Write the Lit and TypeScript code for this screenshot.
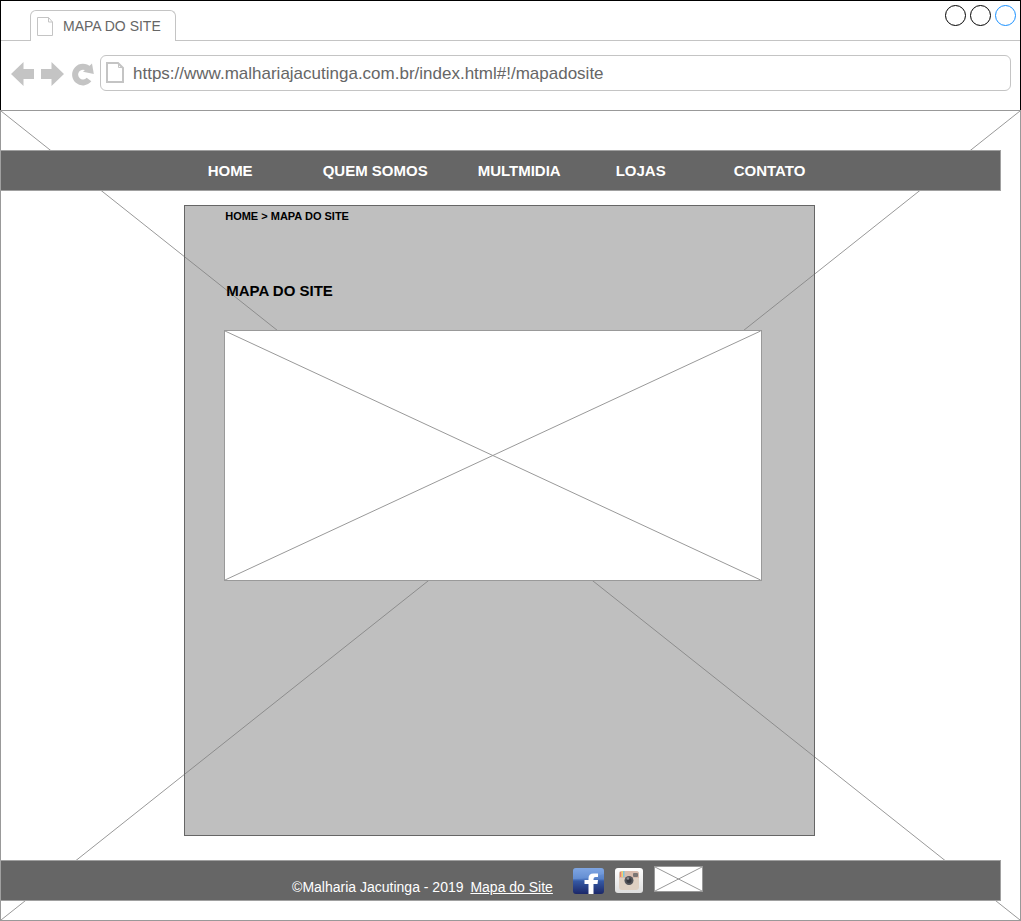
import { LitElement, html, svg, css } from "lit";
import { customElement, property } from "lit/decorators.js";

/** A box crossed by its two diagonals: the wireframe sign for an image. */
@customElement("crossed-box")
class CrossedBox extends LitElement {
  static styles = css`
    :host { display: block; box-sizing: border-box; border: 1px solid #999; background: #fff; }
    .cross { display: block; width: 100%; height: 100%; }
    .cross line { stroke: #999; stroke-width: 1; }
  `;
  render() {
    return html`<svg class="cross" aria-hidden="true">
      <line x1="0" y1="0" x2="100%" y2="100%"></line>
      <line x1="0" y1="100%" x2="100%" y2="0"></line>
    </svg>`;
  }
}

/** A sheet of paper with a folded corner. */
@customElement("page-icon")
class PageIcon extends LitElement {
  @property({ type: Boolean }) heavy = false;
  static styles = css`
    :host { display: block; flex: none; }
    svg { display: block; }
    path { fill: none; stroke: #c4c4c4; }
  `;
  render() {
    return this.heavy
      ? html`<svg width="18" height="21" viewBox="0 0 18 21"><path stroke-width="2" d="M1 1H12L17 6V20H1Z"/><path stroke-width="1" d="M12.5 1V5.5H17"/></svg>`
      : html`<svg width="16" height="19" viewBox="0 0 16 19"><path d="M.5 .5H11.5L15.5 5V18.5H.5Z"/><path d="M11.5 .5V5H15.5"/></svg>`;
  }
}

const facebook = svg`
  <defs>
    <linearGradient id="fb" x1="0" y1="0" x2="0" y2="1">
      <stop offset="0" stop-color="#7da3e0"/><stop offset=".42" stop-color="#5580c8"/>
      <stop offset=".5" stop-color="#3559a4"/><stop offset="1" stop-color="#1b2768"/>
    </linearGradient>
  </defs>
  <rect width="31" height="26" rx="3" fill="url(#fb)"/>
  <path d="M0 11Q15 11 31 6V3Q31 0 28 0H3Q0 0 0 3Z" fill="#86abe8" opacity=".3"/>
  <path d="M15.500 26V16H11.500V12H15.500V10.500Q15.500 5.500 20.500 5.500H25V9H22.500Q20.500 9 20.500 11V12H25L24.500 16H20.500V26Z" fill="#fff"/>`;

const instagram = svg`
  <defs>
    <linearGradient id="ig" x1="0" y1="0" x2="0" y2="1">
      <stop offset="0" stop-color="#fff"/><stop offset="1" stop-color="#dedede"/>
    </linearGradient>
  </defs>
  <rect width="28" height="25" rx="3" fill="url(#ig)"/>
  <rect x="4" y="3" width="20" height="19" rx="3" fill="#dfd0c2"/>
  <path d="M4 10V6Q4 3 7 3H21Q24 3 24 6V10Z" fill="#d8bcae"/>
  <path d="M5 4H6.500V9H5Z" fill="#e87d70"/><path d="M6.500 3H8V9H6.500Z" fill="#f0d070"/>
  <path d="M8 3H9.500V9H8Z" fill="#7fc4dc"/>
  <rect x="18" y="5" width="5" height="4" rx="1" fill="#7c7674"/>
  <circle cx="14" cy="12.500" r="4.500" fill="#55555a"/>
  <circle cx="14" cy="12.500" r="2.500" fill="#38383e"/>
  <circle cx="13" cy="10.500" r="1.300" fill="#8b8b92"/>`;

@customElement("app-root")
class AppRoot extends LitElement {
  static styles = css`
    :host {
      display: flex; flex-direction: column; box-sizing: border-box; min-height: 100vh;
      font-family: "Liberation Sans", Arial, sans-serif; color: #000; background: #fff;
    }
    * { box-sizing: border-box; }
    svg { display: block; }
    a { color: inherit; text-decoration: none; }

    .chrome { border: 1px solid #000; border-bottom: 0; }
    .tabs { display: flex; justify-content: space-between; height: 40px; padding-right: 4px; border-bottom: 1px solid #c4c4c4; }
    .tab {
      display: flex; align-items: center; gap: 10px; height: 31px; margin: 9px 0 0 29px; padding: 0 14px 0 6px;
      border: 1px solid #c4c4c4; border-bottom: 0; border-radius: 6px 6px 0 0;
      background: #fff; font-size: 14px; color: #666;
    }
    .controls { display: flex; gap: 4px; padding-top: 4px; }
    .control { width: 21px; height: 21px; padding: 0; border: 1px solid #000; border-radius: 50%; background: none; }
    .control.active { border-color: #1890ff; }

    .toolbar { display: flex; align-items: center; height: 69px; padding: 0 9px 6px 10px; }
    .tool { flex: none; padding: 2px 0 0; border: 0; background: none; }
    .tool + .tool { margin-left: 7px; }
    .address {
      display: flex; flex: 1; align-items: center; gap: 9px; height: 36px; margin-left: 6px; padding: 0 8px 0 5px;
      border: 1px solid #c4c4c4; border-radius: 6px;
    }
    .url { flex: 1; min-width: 0; padding: 2px 0 0; border: 0; outline: 0; background: none; font: 17px "Liberation Sans", Arial, sans-serif; color: #666; }

    .page { display: grid; flex: 1; }
    .backdrop, .content { grid-area: 1 / 1; }
    .content { z-index: 1; display: flex; flex-direction: column; padding: 40px 20px 20px 0; }
    .bar { border: 1px solid #a0a0a0; background: #666; color: #fff; }
    .menu { display: flex; height: 41px; align-items: center; justify-content: center; font-size: 15px; font-weight: bold; padding-left: 12px; }
    .menu a:nth-child(2) { margin-left: 70px; }
    .menu a:nth-child(3) { margin-left: 50px; }
    .menu a:nth-child(4) { margin-left: 55px; }
    .menu a:nth-child(5) { margin-left: 68px; }

    .panel {
      display: flex; flex: 1; flex-direction: column; align-self: center; width: 63%; margin: 14px 2px 24px 0;
      padding: 0 52px 0 39px; border: 1px solid #666; background: rgba(128, 128, 128, 0.5);
    }
    .crumbs { padding: 4px 0 0 1px; font-size: 11px; line-height: 13px; font-weight: bold; }
    .title { margin: 59px 0 0 2px; font-size: 15px; line-height: 17px; }
    .picture { height: 251px; margin-top: 31px; }

    .footer { display: flex; height: 41px; justify-content: center; align-items: center; padding-right: 6px; font-size: 14px; }
    .legal { padding-top: 12px; }
    .legal a { margin-left: 3px; text-decoration: underline; }
    .facebook { margin-left: 20px; }
    .instagram { margin-left: 11px; }
    .mail { width: 49px; height: 26px; margin: 0 0 3px 11px; }
  `;

  render() {
    return html`
      <header class="chrome">
        <div class="tabs">
          <div class="tab"><page-icon></page-icon><span>MAPA DO SITE</span></div>
          <div class="controls">
            <button class="control" aria-label="Minimizar"></button>
            <button class="control" aria-label="Maximizar"></button>
            <button class="control active" aria-label="Fechar"></button>
          </div>
        </div>
        <div class="toolbar">
          <button class="tool" aria-label="Voltar">
            <svg width="23" height="24" viewBox="0 0 23 24"><path fill="#c4c4c4" d="M0 12L12.500 0V7H23V17H12.500V24Z"/></svg>
          </button>
          <button class="tool" aria-label="Avançar">
            <svg width="23" height="24" viewBox="0 0 23 24"><path fill="#c4c4c4" d="M23 12L10.500 0V7H0V17H10.500V24Z"/></svg>
          </button>
          <button class="tool" aria-label="Recarregar">
            <svg width="23" height="24" viewBox="0 0 23 24">
              <path fill="none" stroke="#c4c4c4" stroke-width="6" d="M18 17.500A7.800 7.800 0 1 1 17.500 7.200"/>
              <path fill="#c4c4c4" d="M21 1.500L22.800 12L12 9.800Z"/>
            </svg>
          </button>
          <div class="address">
            <page-icon heavy></page-icon>
            <input class="url" aria-label="Endereço" value="https://www.malhariajacutinga.com.br/index.html#!/mapadosite">
          </div>
        </div>
      </header>
      <div class="page">
        <crossed-box class="backdrop"></crossed-box>
        <div class="content">
          <nav class="bar menu">
            ${["HOME", "QUEM SOMOS", "MULTMIDIA", "LOJAS", "CONTATO"].map((t) => html`<a href="#">${t}</a>`)}
          </nav>
          <main class="panel">
            <div class="crumbs"><a href="#">HOME</a> &gt; MAPA DO SITE</div>
            <h1 class="title">MAPA DO SITE</h1>
            <crossed-box class="picture"></crossed-box>
          </main>
          <footer class="bar footer">
            <span class="legal">©Malharia Jacutinga - 2019 <a href="#">Mapa do Site</a></span>
            <a class="facebook" href="#" aria-label="Facebook"><svg width="31" height="26" viewBox="0 0 31 26">${facebook}</svg></a>
            <a class="instagram" href="#" aria-label="Instagram"><svg width="28" height="25" viewBox="0 0 28 25">${instagram}</svg></a>
            <crossed-box class="mail"></crossed-box>
          </footer>
        </div>
      </div>
    `;
  }
}
